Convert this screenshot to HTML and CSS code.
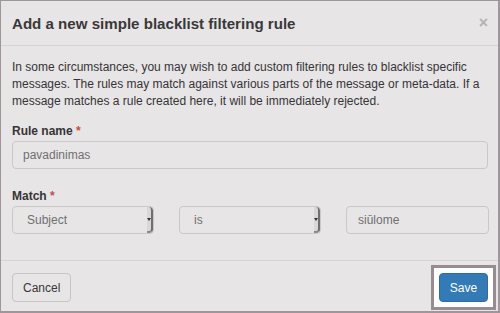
FILE: index.html
```html
<!DOCTYPE html>
<html lang="en">

<head>
    <meta charset="UTF-8">
    <meta name="viewport" content="width=device-width, initial-scale=1.0">
    <title>Blacklist rule</title>
    <link rel="stylesheet" href="styles.css">
</head>

<body>
    <div class="modal">
        <header class="modal-header">
            <h4>Add a new simple blacklist filtering rule</h4>
            <span class="close">&times;</span>
        </header>
        <section class="modal-body">
            <p>In some circumstances, you may wish to add custom filtering rules to blacklist specific
                messages. The rules may match against various parts of the message or meta-data. If a
                message matches a rule created here, it will be immediately rejected.</p>
            <div class="form-group">
                <label>Rule name <span class="req">*</span></label>
                <div class="input">pavadinimas</div>
            </div>
            <div class="form-group">
                <label>Match <span class="req">*</span></label>
                <div class="match-row">
                    <div class="select">
                        <span>Subject</span>
                        <span class="arrow"></span>
                    </div>
                    <div class="select">
                        <span>is</span>
                        <span class="arrow"></span>
                    </div>
                    <div class="input">siūlome</div>
                </div>
            </div>
        </section>
        <footer class="modal-footer">
            <button type="button" class="btn">Cancel</button>
            <!-- highlight frame round the save button -->
            <span class="highlight">
                <button type="button" class="btn btn-primary">Save</button>
            </span>
        </footer>
    </div>
</body>

</html>
```

FILE: styles.css
```css
body {
    margin: 0;
    font-family: "Liberation Sans", Arial, sans-serif;
    color: #363436;
}

.modal {
    width: 500px;
    height: 313px;
    box-sizing: border-box;
    border: 1px solid #9f959a;
    border-width: 1px 2px 2px 1px;
    background-color: #e7e5e6;
    display: flex;
    flex-direction: column;
}

.modal-header {
    display: flex;
    align-items: center;
    justify-content: space-between;
    height: 44px;
    flex-shrink: 0;
    padding: 0 10px 0 11px;
    border-bottom: 1px solid #d5d3d4;
}

.modal-header h4 {
    margin: 0;
    font-size: 15.1px;
    font-weight: bold;
    color: #3a383a;
}

.close {
    font-size: 16px;
    font-weight: bold;
    color: #b3b1b2;
}

.modal-body {
    padding: 13px 10px 0 11px;
    height: 215px;
    flex-shrink: 0;
    box-sizing: border-box;
    border-bottom: 1px solid #d5d3d4;
}

.modal-body p {
    margin: 0 0 13px;
    font-size: 12px;
    line-height: 17px;
}

.form-group {
    margin-bottom: 19px;
}

label {
    display: block;
    font-size: 12px;
    font-weight: bold;
    line-height: 17px;
    margin-bottom: 1px;
}

.req {
    color: #c0504d;
}

.input,
.select {
    box-sizing: border-box;
    height: 28px;
    border: 1px solid #cac8c9;
    border-radius: 4px;
    padding: 0 10px;
    font-size: 12px;
    color: #707070;
    display: flex;
    align-items: center;
}

.match-row {
    display: grid;
    grid-template-columns: 142px 142px 143px;
    column-gap: 25px;
}

.match-row .input {
    padding-left: 11px;
}

.select {
    justify-content: space-between;
    padding-left: 14px;
    padding-right: 0;
}

.arrow {
    width: 6px;
    height: 100%;
    box-sizing: border-box;
    border-right: 2px solid #6f6f6f;
    border-bottom: 2px solid #8a8a8a;
    border-radius: 0 4px 4px 0;
    background-color: #d9d7d8;
    display: flex;
    align-items: center;
    justify-content: center;
}

.arrow::before {
    content: "";
    border-left: 2px solid transparent;
    border-right: 2px solid transparent;
    border-top: 3px solid #333;
}

.modal-footer {
    flex: 1;
    display: flex;
    justify-content: space-between;
    align-items: flex-start;
    padding: 4px 2px 0 11px;
}

.btn {
    height: 29px;
    margin-top: 8px;
    padding: 0 10px;
    font-family: "Liberation Sans", Arial, sans-serif;
    font-size: 12px;
    color: #3a383a;
    background-color: #e7e5e6;
    border: 1px solid #c6c4c5;
    border-radius: 4px;
}

.highlight {
    display: flex;
    padding: 5px;
    background-color: #fff;
    border: 3px solid #978c91;
}

.btn-primary {
    width: 49px;
    margin-top: 0;
    padding: 0;
    color: #fff;
    background-color: #337ab7;
    border-color: #2e6da4;
}
```
